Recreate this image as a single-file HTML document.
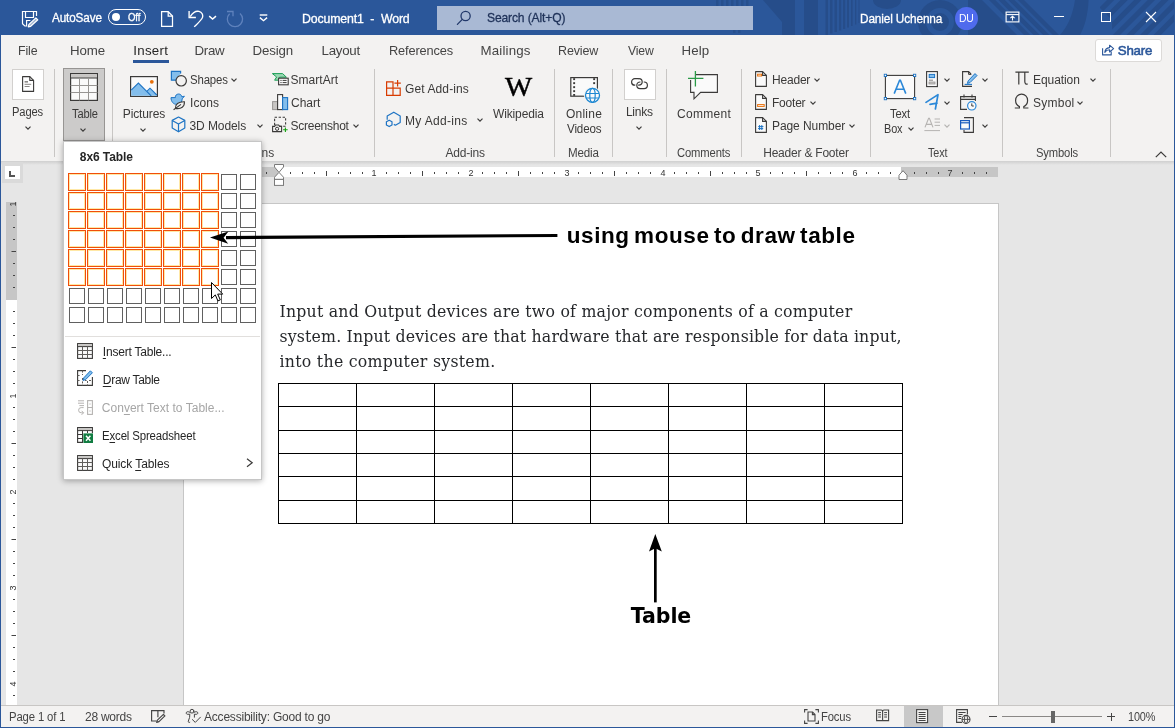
<!DOCTYPE html>
<html lang="en"><head><meta charset="utf-8"><title>Document1 - Word</title>
<style>
html,body{margin:0;padding:0;}
body{width:1175px;height:728px;overflow:hidden;position:relative;background:#e6e6e6;font-family:"Liberation Sans",sans-serif;}
.t{position:absolute;white-space:pre;}
#app{position:absolute;left:0;top:0;width:1175px;height:728px;overflow:hidden;will-change:transform;}
</style></head><body><div id="app">
<div style="position:absolute;left:0px;top:161px;width:1175px;height:544px;background:#e6e6e6;"></div>
<div style="position:absolute;left:0px;top:161px;width:1175px;height:4px;background:linear-gradient(#cfcfcf,#e6e6e6);"></div>
<div style="position:absolute;left:184px;top:204px;width:814px;height:501px;background:#ffffff;box-shadow:0 0 0 1px #c6c6c6;"></div>
<div style="position:absolute;left:262px;top:167px;width:17px;height:10px;background:#c6c6c6;"></div>
<div style="position:absolute;left:278px;top:167px;width:623px;height:10px;background:#ffffff;"></div>
<div style="position:absolute;left:901px;top:167px;width:97px;height:10px;background:#c6c6c6;"></div>
<div style="position:absolute;left:2px;top:162px;width:21px;height:21px;background:#dadada;"></div>
<div style="position:absolute;left:4.5px;top:166px;width:15px;height:13px;background:#ffffff;"></div>
<svg style="position:absolute;left:8px;top:170px;" width="8" height="8" viewBox="0 0 8 8"><path d="M2 1V6H7" fill="none" stroke="#555" stroke-width="2"/></svg>
<div style="position:absolute;left:6px;top:202px;width:11px;height:98px;background:#c6c6c6;"></div>
<div style="position:absolute;left:6px;top:300px;width:11px;height:405px;background:#ffffff;"></div>
<svg style="position:absolute;left:262px;top:167px;" width="736" height="10" viewBox="0 0 736 10"><rect x="4" y="5" width="1" height="2" fill="#444"/><rect x="28" y="5" width="1" height="2" fill="#444"/><rect x="40" y="5" width="1" height="2" fill="#444"/><rect x="52" y="5" width="1" height="2" fill="#444"/><rect x="64" y="4" width="1" height="5" fill="#444"/><rect x="76" y="5" width="1" height="2" fill="#444"/><rect x="88" y="5" width="1" height="2" fill="#444"/><rect x="100" y="5" width="1" height="2" fill="#444"/><rect x="124" y="5" width="1" height="2" fill="#444"/><rect x="136" y="5" width="1" height="2" fill="#444"/><rect x="148" y="5" width="1" height="2" fill="#444"/><rect x="160" y="4" width="1" height="5" fill="#444"/><rect x="172" y="5" width="1" height="2" fill="#444"/><rect x="184" y="5" width="1" height="2" fill="#444"/><rect x="196" y="5" width="1" height="2" fill="#444"/><rect x="220" y="5" width="1" height="2" fill="#444"/><rect x="232" y="5" width="1" height="2" fill="#444"/><rect x="244" y="5" width="1" height="2" fill="#444"/><rect x="256" y="4" width="1" height="5" fill="#444"/><rect x="268" y="5" width="1" height="2" fill="#444"/><rect x="280" y="5" width="1" height="2" fill="#444"/><rect x="292" y="5" width="1" height="2" fill="#444"/><rect x="316" y="5" width="1" height="2" fill="#444"/><rect x="328" y="5" width="1" height="2" fill="#444"/><rect x="340" y="5" width="1" height="2" fill="#444"/><rect x="352" y="4" width="1" height="5" fill="#444"/><rect x="364" y="5" width="1" height="2" fill="#444"/><rect x="376" y="5" width="1" height="2" fill="#444"/><rect x="388" y="5" width="1" height="2" fill="#444"/><rect x="412" y="5" width="1" height="2" fill="#444"/><rect x="424" y="5" width="1" height="2" fill="#444"/><rect x="436" y="5" width="1" height="2" fill="#444"/><rect x="448" y="4" width="1" height="5" fill="#444"/><rect x="460" y="5" width="1" height="2" fill="#444"/><rect x="472" y="5" width="1" height="2" fill="#444"/><rect x="484" y="5" width="1" height="2" fill="#444"/><rect x="508" y="5" width="1" height="2" fill="#444"/><rect x="520" y="5" width="1" height="2" fill="#444"/><rect x="532" y="5" width="1" height="2" fill="#444"/><rect x="544" y="4" width="1" height="5" fill="#444"/><rect x="556" y="5" width="1" height="2" fill="#444"/><rect x="568" y="5" width="1" height="2" fill="#444"/><rect x="580" y="5" width="1" height="2" fill="#444"/><rect x="604" y="5" width="1" height="2" fill="#444"/><rect x="616" y="5" width="1" height="2" fill="#444"/><rect x="628" y="5" width="1" height="2" fill="#444"/><rect x="640" y="4" width="1" height="5" fill="#444"/><rect x="652" y="5" width="1" height="2" fill="#444"/><rect x="664" y="5" width="1" height="2" fill="#444"/><rect x="676" y="5" width="1" height="2" fill="#444"/><rect x="700" y="5" width="1" height="2" fill="#444"/><rect x="712" y="5" width="1" height="2" fill="#444"/><rect x="724" y="5" width="1" height="2" fill="#444"/></svg>
<div class="t" style="left:371.60px;top:166.80px;font-family:'Liberation Sans', sans-serif;font-size:9px;font-weight:400;line-height:12px;color:#333;letter-spacing:0.000px;">1</div>
<div class="t" style="left:468.60px;top:166.80px;font-family:'Liberation Sans', sans-serif;font-size:9px;font-weight:400;line-height:12px;color:#333;letter-spacing:0.000px;">2</div>
<div class="t" style="left:564.60px;top:166.80px;font-family:'Liberation Sans', sans-serif;font-size:9px;font-weight:400;line-height:12px;color:#333;letter-spacing:0.000px;">3</div>
<div class="t" style="left:660.60px;top:166.80px;font-family:'Liberation Sans', sans-serif;font-size:9px;font-weight:400;line-height:12px;color:#333;letter-spacing:0.000px;">4</div>
<div class="t" style="left:755.60px;top:166.80px;font-family:'Liberation Sans', sans-serif;font-size:9px;font-weight:400;line-height:12px;color:#333;letter-spacing:0.000px;">5</div>
<div class="t" style="left:852.60px;top:166.80px;font-family:'Liberation Sans', sans-serif;font-size:9px;font-weight:400;line-height:12px;color:#333;letter-spacing:0.000px;">6</div>
<div class="t" style="left:947.60px;top:166.80px;font-family:'Liberation Sans', sans-serif;font-size:9px;font-weight:400;line-height:12px;color:#333;letter-spacing:0.000px;">7</div>
<svg style="position:absolute;left:273.5px;top:164px;" width="10" height="22" viewBox="0 0 10 22"><g fill="#fff" stroke="#7a7a7a" stroke-width="1"><path d="M0.5 0.5H9.5V3L5 8.4L0.5 3Z"/><path d="M5 8.4L9.5 13.2V15.4H0.5V13.2Z"/><rect x="0.5" y="15.4" width="9" height="6"/></g></svg>
<svg style="position:absolute;left:897.5px;top:170.3px;" width="10" height="10" viewBox="0 0 10 10"><path d="M5 0.7L9 5.2V9.5H1V5.2Z" fill="#fff" stroke="#7a7a7a" stroke-width="1"/></svg>
<svg style="position:absolute;left:6px;top:202px;" width="11" height="503" viewBox="0 0 11 503"><rect x="7" y="13" width="2" height="1" fill="#444"/><rect x="7" y="25" width="2" height="1" fill="#444"/><rect x="7" y="37" width="2" height="1" fill="#444"/><rect x="5.5" y="49" width="4.5" height="1" fill="#444"/><rect x="7" y="61" width="2" height="1" fill="#444"/><rect x="7" y="73" width="2" height="1" fill="#444"/><rect x="7" y="85" width="2" height="1" fill="#444"/><rect x="7" y="109" width="2" height="1" fill="#444"/><rect x="7" y="121" width="2" height="1" fill="#444"/><rect x="7" y="133" width="2" height="1" fill="#444"/><rect x="5.5" y="145" width="4.5" height="1" fill="#444"/><rect x="7" y="157" width="2" height="1" fill="#444"/><rect x="7" y="169" width="2" height="1" fill="#444"/><rect x="7" y="181" width="2" height="1" fill="#444"/><rect x="7" y="205" width="2" height="1" fill="#444"/><rect x="7" y="217" width="2" height="1" fill="#444"/><rect x="7" y="229" width="2" height="1" fill="#444"/><rect x="5.5" y="241" width="4.5" height="1" fill="#444"/><rect x="7" y="253" width="2" height="1" fill="#444"/><rect x="7" y="265" width="2" height="1" fill="#444"/><rect x="7" y="277" width="2" height="1" fill="#444"/><rect x="7" y="301" width="2" height="1" fill="#444"/><rect x="7" y="313" width="2" height="1" fill="#444"/><rect x="7" y="325" width="2" height="1" fill="#444"/><rect x="5.5" y="337" width="4.5" height="1" fill="#444"/><rect x="7" y="349" width="2" height="1" fill="#444"/><rect x="7" y="361" width="2" height="1" fill="#444"/><rect x="7" y="373" width="2" height="1" fill="#444"/><rect x="7" y="397" width="2" height="1" fill="#444"/><rect x="7" y="409" width="2" height="1" fill="#444"/><rect x="7" y="421" width="2" height="1" fill="#444"/><rect x="5.5" y="433" width="4.5" height="1" fill="#444"/><rect x="7" y="445" width="2" height="1" fill="#444"/><rect x="7" y="457" width="2" height="1" fill="#444"/><rect x="7" y="469" width="2" height="1" fill="#444"/><rect x="7" y="493" width="2" height="1" fill="#444"/></svg>
<div class="t" style="left:0;top:0;width:0;height:0;"><div style="position:absolute;left:12.5px;top:203.5px;transform:translate(-50%,-50%) rotate(-90deg);font-size:9px;line-height:9px;color:#333;">1</div></div>
<div class="t" style="left:0;top:0;width:0;height:0;"><div style="position:absolute;left:12.5px;top:395.5px;transform:translate(-50%,-50%) rotate(-90deg);font-size:9px;line-height:9px;color:#333;">1</div></div>
<div class="t" style="left:0;top:0;width:0;height:0;"><div style="position:absolute;left:12.5px;top:491.5px;transform:translate(-50%,-50%) rotate(-90deg);font-size:9px;line-height:9px;color:#333;">2</div></div>
<div class="t" style="left:0;top:0;width:0;height:0;"><div style="position:absolute;left:12.5px;top:587.5px;transform:translate(-50%,-50%) rotate(-90deg);font-size:9px;line-height:9px;color:#333;">3</div></div>
<div class="t" style="left:0;top:0;width:0;height:0;"><div style="position:absolute;left:12.5px;top:683.5px;transform:translate(-50%,-50%) rotate(-90deg);font-size:9px;line-height:9px;color:#333;">4</div></div>
<div class="t" style="left:279.50px;top:300.00px;font-family:'DejaVu Serif Condensed', 'DejaVu Serif', 'Liberation Serif', serif;font-size:17.5px;font-weight:400;line-height:23px;color:#26282b;letter-spacing:0.226px;">Input and Output devices are two of major components of a computer</div>
<div class="t" style="left:279.50px;top:325.00px;font-family:'DejaVu Serif Condensed', 'DejaVu Serif', 'Liberation Serif', serif;font-size:17.5px;font-weight:400;line-height:23px;color:#26282b;letter-spacing:0.180px;">system. Input devices are that hardware that are responsible for data input,</div>
<div class="t" style="left:279.50px;top:350.00px;font-family:'DejaVu Serif Condensed', 'DejaVu Serif', 'Liberation Serif', serif;font-size:17.5px;font-weight:400;line-height:23px;color:#26282b;letter-spacing:0.279px;">into the computer system.</div>
<svg style="position:absolute;left:278px;top:383px;" width="625" height="141" viewBox="0 0 625 141"><rect x="0" y="0" width="1" height="141" fill="#000"/><rect x="78" y="0" width="1" height="141" fill="#000"/><rect x="156" y="0" width="1" height="141" fill="#000"/><rect x="234" y="0" width="1" height="141" fill="#000"/><rect x="312" y="0" width="1" height="141" fill="#000"/><rect x="390" y="0" width="1" height="141" fill="#000"/><rect x="468" y="0" width="1" height="141" fill="#000"/><rect x="546" y="0" width="1" height="141" fill="#000"/><rect x="624" y="0" width="1" height="141" fill="#000"/><rect x="0" y="0" width="625" height="1" fill="#000"/><rect x="0" y="23" width="625" height="1" fill="#000"/><rect x="0" y="47" width="625" height="1" fill="#000"/><rect x="0" y="70" width="625" height="1" fill="#000"/><rect x="0" y="93" width="625" height="1" fill="#000"/><rect x="0" y="117" width="625" height="1" fill="#000"/><rect x="0" y="140" width="625" height="1" fill="#000"/></svg>
<div class="t" style="left:566.70px;top:220.70px;font-family:'Liberation Sans', sans-serif;font-size:22.5px;font-weight:700;line-height:29px;color:#000;letter-spacing:0.604px;word-spacing:-2.5px;">using mouse to draw table</div>
<div class="t" style="left:630.80px;top:602.60px;font-family:'DejaVu Sans', 'Liberation Sans', sans-serif;font-size:20.5px;font-weight:700;line-height:27px;color:#000;letter-spacing:-0.075px;">Table</div>
<div style="position:absolute;left:0px;top:0px;width:1175px;height:35px;background:#2b579a;"></div>
<svg style="position:absolute;left:0px;top:0px;" width="1175" height="35" viewBox="0 0 1175 35"><rect x="716" y="0" width="2.5" height="6" fill="#264d8a" opacity="0.8"/><rect x="733" y="29" width="2.5" height="4" fill="#264d8a" opacity="0.8"/><rect x="721" y="0" width="2.5" height="6" fill="#264d8a" opacity="0.8"/><rect x="738" y="29" width="2.5" height="4" fill="#264d8a" opacity="0.8"/><rect x="726" y="0" width="2.5" height="6" fill="#264d8a" opacity="0.8"/><rect x="731" y="0" width="2.5" height="6" fill="#264d8a" opacity="0.8"/><rect x="736" y="0" width="2.5" height="6" fill="#264d8a" opacity="0.8"/><rect x="741" y="0" width="2.5" height="6" fill="#264d8a" opacity="0.8"/><rect x="746" y="0" width="2.5" height="6" fill="#264d8a" opacity="0.8"/><path d="M763 0H795V35H782V22Z" fill="#264d8a"/><rect x="804" y="0" width="14" height="35" fill="#264d8a"/><rect x="825.5" y="0" width="2.5" height="35.0" fill="#264d8a"/><rect x="830" y="0" width="2.5" height="33.5" fill="#264d8a"/><rect x="834.5" y="0" width="2.5" height="32.0" fill="#264d8a"/><rect x="839" y="0" width="2.2" height="30.5" fill="#264d8a"/><rect x="843" y="0" width="2.2" height="29.0" fill="#264d8a"/><rect x="847" y="0" width="2" height="27.5" fill="#264d8a"/><rect x="851" y="0" width="1.6" height="26.0" fill="#264d8a"/><rect x="855" y="0" width="1.3" height="24.5" fill="#264d8a"/><rect x="858.5" y="0" width="1" height="23.0" fill="#264d8a"/><path d="M873 0A14 9 0 0 0 901 0Z" fill="#264d8a"/><circle cx="940" cy="22" r="22" fill="#264d8a"/><circle cx="940" cy="22" r="11.5" fill="none" stroke="#2b579a" stroke-width="5"/><path d="M968 0H982L1017 35H968Z" fill="#264d8a"/><path d="M989.0 0h6.2l35 35h-6.2Z" fill="#264d8a"/><path d="M998.6 0h6.2l35 35h-6.2Z" fill="#264d8a"/><path d="M1008.2 0h6.2l35 35h-6.2Z" fill="#264d8a"/><path d="M1017.8 0h6.2l35 35h-6.2Z" fill="#264d8a"/><path d="M1075 0H1088.6C1088 14 1085 26 1080 35H1060C1068 26 1073 14 1075 0Z" fill="#264d8a"/><clipPath id="cpr"><path d="M1100 0H1175V35H1112V20L1100 8Z"/></clipPath><g clip-path="url(#cpr)"><path d="M1107.0 0h7.2l-35 35h-7.2Z" fill="#264d8a"/><path d="M1120.6 0h7.2l-35 35h-7.2Z" fill="#264d8a"/><path d="M1134.2 0h7.2l-35 35h-7.2Z" fill="#264d8a"/><path d="M1147.8 0h7.2l-35 35h-7.2Z" fill="#264d8a"/><path d="M1161.4 0h7.2l-35 35h-7.2Z" fill="#264d8a"/><path d="M1175.0 0h7.2l-35 35h-7.2Z" fill="#264d8a"/><path d="M1188.6 0h7.2l-35 35h-7.2Z" fill="#264d8a"/></g></svg>
<svg style="position:absolute;left:20px;top:9px;" width="20" height="20" viewBox="0 0 20 20"><g fill="none" stroke="#ffffff" stroke-width="1.2" stroke-linejoin="miter"><path d="M16.5 6.9V2.5H2.5V14.7L4.8 17H6.6V11.5H10.4"/><path d="M5.5 2.5V8.5H13.5V2.5"/><path d="M15.9 8.9L17.8 10.8L10.7 17.3L8.3 17.9L8.9 15.5Z" stroke-linejoin="round" fill="#ffffff" fill-opacity="0.55"/></g></svg>
<div class="t" style="left:51.50px;top:9.00px;font-family:'Liberation Sans', sans-serif;font-size:13px;font-weight:400;line-height:17px;color:#ffffff;letter-spacing:-0.150px;transform:scaleX(0.9026);transform-origin:0 0;-webkit-text-stroke:0.3px;">AutoSave</div>
<div style="position:absolute;left:108px;top:9px;width:38px;height:16px;box-sizing:border-box;border:1px solid #fff;border-radius:8px;"></div>
<div style="position:absolute;left:112px;top:13.2px;width:8px;height:8px;background:#ffffff;border-radius:4px;"></div>
<div class="t" style="left:127.50px;top:10.00px;font-family:'Liberation Sans', sans-serif;font-size:10.5px;font-weight:400;line-height:14px;color:#ffffff;letter-spacing:-0.150px;transform:scaleX(0.9124);transform-origin:0 0;-webkit-text-stroke:0.3px;">Off</div>
<svg style="position:absolute;left:159px;top:10px;" width="16" height="18" viewBox="0 0 16 18"><g fill="none" stroke="#ffffff" stroke-width="1.25" stroke-linejoin="miter"><path d="M2.6 1.7H9.2L13.5 6V16.3H2.6Z"/><path d="M9.2 1.7V6.1H13.5"/></g></svg>
<svg style="position:absolute;left:187px;top:10px;" width="18" height="18" viewBox="0 0 18 18"><g fill="none" stroke="#ffffff" stroke-width="1.35" stroke-linecap="butt" stroke-linejoin="miter"><path d="M2.1 0.9V7.5H8.9"/><path d="M3.2 6.6C5.6 2.9 9.2 0.8 12 1.4C15 2 16.3 5 15.4 7.6C14.6 9.9 10.2 13.8 7.2 16.9"/></g></svg>
<svg style="position:absolute;left:208px;top:14px;" width="10" height="7" viewBox="0 0 10 7"><path d="M1.2 2.2L4.6 5L8 2.2" fill="none" stroke="#ffffff" stroke-width="1.5"/></svg>
<svg style="position:absolute;left:225px;top:10px;" width="19" height="18" viewBox="0 0 19 18"><g fill="none" stroke="#5f82bd" stroke-width="1.3"><path d="M2 1.5H8V6.3"/><path d="M4.6 3.7A7.6 7.6 0 1 0 15 3.4"/></g></svg>
<svg style="position:absolute;left:258px;top:13px;" width="11" height="9" viewBox="0 0 11 9"><g fill="none" stroke="#ffffff" stroke-width="1.4"><path d="M1.7 2H9.3"/><path d="M1.9 4.6L5.5 7.7L9.1 4.6"/></g></svg>
<div class="t" style="left:302.05px;top:10.00px;font-family:'Liberation Sans', sans-serif;font-size:13px;font-weight:400;line-height:17px;color:#ffffff;letter-spacing:-0.150px;transform:scaleX(0.9489);transform-origin:0 0;-webkit-text-stroke:0.3px;">Document1  -  Word</div>
<div style="position:absolute;left:437px;top:6px;width:316px;height:24px;background:#a9b9d4;"></div>
<svg style="position:absolute;left:456px;top:10px;" width="16" height="16" viewBox="0 0 16 16"><g fill="none" stroke="#22386a" stroke-width="1.3" stroke-linecap="round"><circle cx="9.6" cy="6" r="4.6"/><path d="M6.3 9.4L1.4 14.4"/></g></svg>
<div class="t" style="left:486.57px;top:9.00px;font-family:'Liberation Sans', sans-serif;font-size:13px;font-weight:400;line-height:17px;color:#1e3158;letter-spacing:-0.150px;transform:scaleX(0.9296);transform-origin:0 0;-webkit-text-stroke:0.3px;">Search (Alt+Q)</div>
<div class="t" style="left:860.09px;top:9.50px;font-family:'Liberation Sans', sans-serif;font-size:13px;font-weight:400;line-height:17px;color:#ffffff;letter-spacing:-0.150px;transform:scaleX(0.9095);transform-origin:0 0;-webkit-text-stroke:0.3px;">Daniel Uchenna</div>
<div style="position:absolute;left:954.5px;top:6.5px;width:23px;height:23px;background:#4f6bed;border-radius:12px;"></div>
<div class="t" style="left:958.55px;top:11.00px;font-family:'Liberation Sans', sans-serif;font-size:11px;font-weight:400;line-height:14px;color:#ffffff;letter-spacing:-0.150px;transform:scaleX(0.9458);transform-origin:0 0;">DU</div>
<svg style="position:absolute;left:1005px;top:11px;" width="15" height="12" viewBox="0 0 15 12"><g fill="none" stroke="#ffffff" stroke-width="1.1"><rect x="1.1" y="1.1" width="12.8" height="9.8"/><path d="M1.1 3.6H13.9"/><path d="M7.5 9.6V5.4M5.4 7.2L7.5 5.2L9.6 7.2"/></g></svg>
<div style="position:absolute;left:1054px;top:16px;width:10px;height:1px;background:#ffffff;"></div>
<div style="position:absolute;left:1100.5px;top:12px;width:10px;height:10px;box-sizing:border-box;border:1px solid #fff;"></div>
<svg style="position:absolute;left:1145px;top:11px;" width="12" height="12" viewBox="0 0 12 12"><path d="M1 1L11 11M11 1L1 11" stroke="#ffffff" stroke-width="1.1" fill="none"/></svg>
<div style="position:absolute;left:0px;top:35px;width:1175px;height:126px;background:#f3f2f1;"></div>
<div class="t" style="left:17.57px;top:42.00px;font-family:'Liberation Sans', sans-serif;font-size:13.3px;font-weight:400;line-height:17px;color:#444444;letter-spacing:-0.150px;transform:scaleX(0.9309);transform-origin:0 0;">File</div>
<div class="t" style="left:70.00px;top:42.00px;font-family:'Liberation Sans', sans-serif;font-size:13.3px;font-weight:400;line-height:17px;color:#444444;letter-spacing:-0.100px;">Home</div>
<div class="t" style="left:133.20px;top:42.00px;font-family:'Liberation Sans', sans-serif;font-size:13.3px;font-weight:400;line-height:17px;color:#262626;letter-spacing:0.300px;">Insert</div>
<div class="t" style="left:194.50px;top:42.00px;font-family:'Liberation Sans', sans-serif;font-size:13.3px;font-weight:400;line-height:17px;color:#444444;letter-spacing:-0.267px;">Draw</div>
<div class="t" style="left:252.50px;top:42.00px;font-family:'Liberation Sans', sans-serif;font-size:13.3px;font-weight:400;line-height:17px;color:#444444;letter-spacing:-0.140px;">Design</div>
<div class="t" style="left:321.50px;top:42.00px;font-family:'Liberation Sans', sans-serif;font-size:13.3px;font-weight:400;line-height:17px;color:#444444;letter-spacing:-0.260px;">Layout</div>
<div class="t" style="left:388.54px;top:42.00px;font-family:'Liberation Sans', sans-serif;font-size:13.3px;font-weight:400;line-height:17px;color:#444444;letter-spacing:-0.150px;transform:scaleX(0.9627);transform-origin:0 0;">References</div>
<div class="t" style="left:480.50px;top:42.00px;font-family:'Liberation Sans', sans-serif;font-size:13.3px;font-weight:400;line-height:17px;color:#444444;letter-spacing:0.171px;">Mailings</div>
<div class="t" style="left:558.31px;top:42.00px;font-family:'Liberation Sans', sans-serif;font-size:13.3px;font-weight:400;line-height:17px;color:#444444;letter-spacing:-0.150px;transform:scaleX(0.9396);transform-origin:0 0;">Review</div>
<div class="t" style="left:628.00px;top:42.00px;font-family:'Liberation Sans', sans-serif;font-size:13.3px;font-weight:400;line-height:17px;color:#444444;letter-spacing:-0.150px;transform:scaleX(0.9177);transform-origin:0 0;">View</div>
<div class="t" style="left:681.50px;top:42.00px;font-family:'Liberation Sans', sans-serif;font-size:13.3px;font-weight:400;line-height:17px;color:#444444;letter-spacing:0.067px;">Help</div>
<div style="position:absolute;left:133px;top:60px;width:36px;height:3px;background:#2b579a;"></div>
<div style="position:absolute;left:1094.5px;top:38.5px;width:67px;height:23px;background:#ffffff;box-sizing:border-box;border:1px solid #dcdad8;border-radius:3px;"></div>
<div class="t" style="left:1117.70px;top:42.00px;font-family:'Liberation Sans', sans-serif;font-size:13.3px;font-weight:400;line-height:17px;color:#2b579a;letter-spacing:-0.175px;-webkit-text-stroke:0.55px;">Share</div>
<div style="position:absolute;left:54px;top:69px;width:1px;height:88px;background:#c8c6c4;"></div>
<div style="position:absolute;left:112px;top:69px;width:1px;height:88px;background:#c8c6c4;"></div>
<div style="position:absolute;left:374px;top:69px;width:1px;height:88px;background:#c8c6c4;"></div>
<div style="position:absolute;left:554px;top:69px;width:1px;height:88px;background:#c8c6c4;"></div>
<div style="position:absolute;left:612px;top:69px;width:1px;height:88px;background:#c8c6c4;"></div>
<div style="position:absolute;left:666px;top:69px;width:1px;height:88px;background:#c8c6c4;"></div>
<div style="position:absolute;left:741px;top:69px;width:1px;height:88px;background:#c8c6c4;"></div>
<div style="position:absolute;left:870px;top:69px;width:1px;height:88px;background:#c8c6c4;"></div>
<div style="position:absolute;left:1002px;top:69px;width:1px;height:88px;background:#c8c6c4;"></div>
<div style="position:absolute;left:1110px;top:69px;width:1px;height:88px;background:#c8c6c4;"></div>
<div style="position:absolute;left:12px;top:69px;width:32px;height:31px;background:#ffffff;box-sizing:border-box;border:1px solid #d2d0ce;"></div>
<svg style="position:absolute;left:21px;top:75px;" width="15" height="18" viewBox="0 0 15 18"><g fill="none" stroke="#3b3a39" stroke-width="1.1" stroke-linejoin="round"><path d="M1.6 1.6H8.8L12.6 5.4V16.4H1.6Z"/><path d="M8.8 1.6V5.4H12.6"/></g><rect x="3.6" y="6" width="3.4" height="1.6" fill="#8a8886"/><rect x="3.6" y="8.8" width="6.6" height="1" fill="#8a8886"/><rect x="3.6" y="11" width="5" height="1" fill="#8a8886"/></svg>
<div class="t" style="left:12.07px;top:103.60px;font-family:'Liberation Sans', sans-serif;font-size:12px;font-weight:400;line-height:16px;color:#3b3a39;letter-spacing:-0.150px;transform:scaleX(0.9321);transform-origin:0 0;">Pages</div>
<svg style="position:absolute;left:24.6px;top:125.7px;" width="8" height="6" viewBox="0 0 8 6"><path d="M0.5 0.6L3.0 3.2L5.5 0.6" fill="none" stroke="#3b3a39" stroke-width="1.15"/></svg>
<div style="position:absolute;left:63px;top:68px;width:42px;height:73px;background:#cccbca;box-sizing:border-box;border:1px solid #979593;"></div>
<svg style="position:absolute;left:70px;top:73px;" width="28" height="28" viewBox="0 0 28 28"><rect x="0.6" y="0.6" width="26.8" height="26.8" fill="#fafafa" stroke="#3b3a39" stroke-width="1.2"/><rect x="1.2" y="1.2" width="25.6" height="3.6" fill="#c8c6c4"/><path d="M0.6 5H27.4" stroke="#3b3a39" stroke-width="1"/><path d="M9.5 5V27.4" stroke="#979593" stroke-width="1"/><path d="M18.5 5V27.4" stroke="#979593" stroke-width="1"/><path d="M0.6 12.5H27.4" stroke="#979593" stroke-width="1"/><path d="M0.6 19.5H27.4" stroke="#979593" stroke-width="1"/></svg>
<div class="t" style="left:71.50px;top:106.00px;font-family:'Liberation Sans', sans-serif;font-size:12px;font-weight:400;line-height:16px;color:#3b3a39;letter-spacing:-0.150px;transform:scaleX(0.9270);transform-origin:0 0;">Table</div>
<svg style="position:absolute;left:80.39999999999999px;top:127.5px;" width="8" height="6" viewBox="0 0 8 6"><path d="M0.5 0.6L3.0 3.2L5.5 0.6" fill="none" stroke="#3b3a39" stroke-width="1.15"/></svg>
<svg style="position:absolute;left:130px;top:76px;" width="28" height="21" viewBox="0 0 28 21"><rect x="0.6" y="0.6" width="26.8" height="19.8" fill="#fafafa" stroke="#3b3a39" stroke-width="1.2"/><path d="M1.2 14.2L8.4 7L17 15.6L20 12.4L26.8 19.2V19.8H1.2Z" fill="#83beec"/><path d="M1.2 14.2L8.4 7L21.2 19.8M16.8 15.4L20 12.2L26.8 19" fill="none" stroke="#1e74c4" stroke-width="1.1"/><circle cx="21.8" cy="5.8" r="1.9" fill="#e8700a"/></svg>
<div class="t" style="left:122.80px;top:106.00px;font-family:'Liberation Sans', sans-serif;font-size:12px;font-weight:400;line-height:16px;color:#3b3a39;letter-spacing:-0.129px;">Pictures</div>
<svg style="position:absolute;left:140.29999999999998px;top:127.5px;" width="8" height="6" viewBox="0 0 8 6"><path d="M0.5 0.6L3.0 3.2L5.5 0.6" fill="none" stroke="#3b3a39" stroke-width="1.15"/></svg>
<svg style="position:absolute;left:170px;top:70px;" width="18" height="18" viewBox="0 0 18 18"><path d="M6.2 10.2H1.4V1.4H10.6V3.6" fill="#83beec" stroke="#1e74c4" stroke-width="1.2"/><circle cx="11.2" cy="10.8" r="5.2" fill="#f3f2f1" stroke="#3b3a39" stroke-width="1.2"/></svg>
<div class="t" style="left:189.55px;top:72.00px;font-family:'Liberation Sans', sans-serif;font-size:12px;font-weight:400;line-height:16px;color:#3b3a39;letter-spacing:-0.150px;transform:scaleX(0.9490);transform-origin:0 0;">Shapes</div>
<svg style="position:absolute;left:231.1px;top:77.6px;" width="8" height="6" viewBox="0 0 8 6"><path d="M0.5 0.6L3.0 3.2L5.5 0.6" fill="none" stroke="#3b3a39" stroke-width="1.15"/></svg>
<svg style="position:absolute;left:170px;top:93px;" width="16" height="18" viewBox="0 0 16 18"><path d="M1 4.6H5.4C5 2.6 6.6 1 8.6 1C10.4 1 11.6 2.2 11.8 3.8L14.4 3.2L12.2 5.8C12.2 9 10.2 11.4 6.8 11.4C3.4 11.4 1 8.6 1 4.6Z" fill="#83beec" stroke="#1e74c4" stroke-width="1"/><path d="M5.4 15.4C5 11.4 8.4 8.6 14.4 8.8C14.8 13.6 11.2 16.4 5.4 15.4Z" fill="#f3f2f1" stroke="#3b3a39" stroke-width="1.1"/><path d="M3.6 16.8L11 11.4" stroke="#3b3a39" stroke-width="1.1"/></svg>
<div class="t" style="left:190.00px;top:95.00px;font-family:'Liberation Sans', sans-serif;font-size:12px;font-weight:400;line-height:16px;color:#3b3a39;letter-spacing:0.050px;">Icons</div>
<svg style="position:absolute;left:171px;top:116px;" width="15" height="17" viewBox="0 0 15 17"><g fill="none" stroke="#1e74c4" stroke-width="1.2" stroke-linejoin="round"><path d="M7.5 1L13.8 4.4V12L7.5 15.8L1.2 12V4.4Z"/><path d="M1.2 4.4L7.5 8L13.8 4.4M7.5 8V15.8"/></g></svg>
<div class="t" style="left:189.50px;top:118.00px;font-family:'Liberation Sans', sans-serif;font-size:12px;font-weight:400;line-height:16px;color:#3b3a39;letter-spacing:-0.088px;">3D Models</div>
<svg style="position:absolute;left:256.6px;top:123.6px;" width="8" height="6" viewBox="0 0 8 6"><path d="M0.5 0.6L3.0 3.2L5.5 0.6" fill="none" stroke="#3b3a39" stroke-width="1.15"/></svg>
<svg style="position:absolute;left:272px;top:73px;" width="17" height="13" viewBox="0 0 17 13"><path d="M0.4 0.6H10.6L14.4 4.2H7.6V7.2H2.6L4.6 4Z" fill="#9ad7b3" stroke="#1a9e55" stroke-width="1"/><rect x="6.6" y="5.2" width="9.6" height="6.6" fill="#fafafa" stroke="#3b3a39" stroke-width="1.1"/><path d="M8.4 7.4H9.6M10.6 7.4H14.6M8.4 9.6H9.6M10.6 9.6H14.6" stroke="#3b3a39" stroke-width="1"/></svg>
<div class="t" style="left:290.50px;top:72.00px;font-family:'Liberation Sans', sans-serif;font-size:12px;font-weight:400;line-height:16px;color:#3b3a39;letter-spacing:0.043px;">SmartArt</div>
<svg style="position:absolute;left:272px;top:94px;" width="17" height="17" viewBox="0 0 17 17"><rect x="0.6" y="7.6" width="5" height="8" fill="#c8c6c4" stroke="#979593" stroke-width="1"/><rect x="5.6" y="0.6" width="5" height="15" fill="#fafafa" stroke="#3b3a39" stroke-width="1.1"/><rect x="10.6" y="3.6" width="5" height="12" fill="#83beec" stroke="#1e74c4" stroke-width="1.1"/></svg>
<div class="t" style="left:291.00px;top:95.00px;font-family:'Liberation Sans', sans-serif;font-size:12px;font-weight:400;line-height:16px;color:#3b3a39;letter-spacing:0.000px;">Chart</div>
<svg style="position:absolute;left:272px;top:116px;" width="17" height="17" viewBox="0 0 17 17"><rect x="2.6" y="1.2" width="11" height="9" fill="none" stroke="#3b3a39" stroke-width="1.1" stroke-dasharray="2.4 1.6"/><path d="M0.6 10.4H2.6L3.6 9H6.6L7.6 10.4H9.6V15.6H0.6Z" fill="#f3f2f1" stroke="#3b3a39" stroke-width="1.1"/><circle cx="5.1" cy="12.8" r="1.6" fill="none" stroke="#3b3a39" stroke-width="1"/><path d="M13.4 11.4V16M11.1 13.7H15.7" stroke="#13a10e" stroke-width="1.1"/></svg>
<div class="t" style="left:290.50px;top:118.00px;font-family:'Liberation Sans', sans-serif;font-size:12px;font-weight:400;line-height:16px;color:#3b3a39;letter-spacing:-0.256px;">Screenshot</div>
<svg style="position:absolute;left:353.1px;top:123.6px;" width="8" height="6" viewBox="0 0 8 6"><path d="M0.5 0.6L3.0 3.2L5.5 0.6" fill="none" stroke="#3b3a39" stroke-width="1.15"/></svg>
<div class="t" style="left:211.50px;top:145.00px;font-family:'Liberation Sans', sans-serif;font-size:12px;font-weight:400;line-height:16px;color:#444;letter-spacing:0.175px;">Illustrations</div>
<svg style="position:absolute;left:386px;top:80px;" width="16" height="16" viewBox="0 0 16 16"><g fill="none" stroke="#d83b01" stroke-width="1.2"><path d="M0.6 8.2V1.8H7V8.2M0.6 8.2H14.2V15.4H0.6ZM7 8.2V15.4"/><path d="M11.6 0V6.4M8.4 3.2H14.8"/></g></svg>
<div class="t" style="left:405.00px;top:81.00px;font-family:'Liberation Sans', sans-serif;font-size:12px;font-weight:400;line-height:16px;color:#3b3a39;letter-spacing:0.110px;">Get Add-ins</div>
<svg style="position:absolute;left:385px;top:111px;" width="17" height="17" viewBox="0 0 17 17"><g fill="none" stroke="#1e74c4" stroke-width="1.2" stroke-linejoin="round"><path d="M2.2 8.8V5L8.8 1.2L15.2 5V11.4L10.4 14.2L8.8 13.4"/><path d="M4.2 9.2L7 10.8V14L4.2 15.6L1.4 14V10.8Z"/></g></svg>
<div class="t" style="left:405.00px;top:112.70px;font-family:'Liberation Sans', sans-serif;font-size:12px;font-weight:400;line-height:16px;color:#3b3a39;letter-spacing:0.322px;">My Add-ins</div>
<svg style="position:absolute;left:477.3px;top:118.4px;" width="8" height="6" viewBox="0 0 8 6"><path d="M0.5 0.6L3.0 3.2L5.5 0.6" fill="none" stroke="#3b3a39" stroke-width="1.15"/></svg>
<div class="t" style="left:504.50px;top:69.50px;font-family:'Liberation Serif', serif;font-size:27px;font-weight:400;line-height:35px;color:#000;letter-spacing:0.000px;transform:scaleX(1.0654);transform-origin:0 0;-webkit-text-stroke:0.45px;">W</div>
<div class="t" style="left:493.00px;top:106.00px;font-family:'Liberation Sans', sans-serif;font-size:12px;font-weight:400;line-height:16px;color:#3b3a39;letter-spacing:-0.137px;">Wikipedia</div>
<div class="t" style="left:445.50px;top:145.00px;font-family:'Liberation Sans', sans-serif;font-size:12px;font-weight:400;line-height:16px;color:#444;letter-spacing:-0.217px;">Add-ins</div>
<svg style="position:absolute;left:570px;top:76px;" width="31" height="27" viewBox="0 0 31 27"><rect x="0.8" y="1.6" width="26.6" height="18.6" fill="#fafafa" stroke="#3b3a39" stroke-width="1.2"/><rect x="3.2" y="2.2" width="1.9" height="1.9" fill="#3b3a39"/><rect x="3.2" y="6.2" width="1.9" height="1.9" fill="#3b3a39"/><rect x="3.2" y="10.2" width="1.9" height="1.9" fill="#3b3a39"/><rect x="3.2" y="14.2" width="1.9" height="1.9" fill="#3b3a39"/><rect x="3.2" y="18" width="1.9" height="1.9" fill="#3b3a39"/><rect x="23.2" y="2.2" width="1.9" height="1.9" fill="#3b3a39"/><rect x="23.2" y="6.2" width="1.9" height="1.9" fill="#3b3a39"/><circle cx="22.5" cy="19.3" r="8.6" fill="#f3f2f1"/><circle cx="22.5" cy="19.3" r="7" fill="#fafafa" stroke="#1e88d2" stroke-width="1.3"/><ellipse cx="22.5" cy="19.3" rx="2.7" ry="7" fill="none" stroke="#1e88d2" stroke-width="1.2"/><path d="M16 17.5H29M16 22H29" stroke="#1e88d2" stroke-width="1.1"/></svg>
<div class="t" style="left:565.90px;top:106.00px;font-family:'Liberation Sans', sans-serif;font-size:12px;font-weight:400;line-height:16px;color:#3b3a39;letter-spacing:0.260px;">Online</div>
<div class="t" style="left:566.90px;top:121.30px;font-family:'Liberation Sans', sans-serif;font-size:12px;font-weight:400;line-height:16px;color:#3b3a39;letter-spacing:-0.150px;transform:scaleX(0.9674);transform-origin:0 0;">Videos</div>
<div class="t" style="left:568.24px;top:145.00px;font-family:'Liberation Sans', sans-serif;font-size:12px;font-weight:400;line-height:16px;color:#444;letter-spacing:-0.150px;transform:scaleX(0.9650);transform-origin:0 0;">Media</div>
<div style="position:absolute;left:624px;top:69px;width:32px;height:31px;background:#ffffff;box-sizing:border-box;border:1px solid #d2d0ce;"></div>
<svg style="position:absolute;left:631px;top:78px;" width="18" height="12" viewBox="0 0 18 12"><g fill="none" stroke="#3b3a39" stroke-width="1.2"><rect x="0.6" y="0.6" width="10.6" height="6.6" rx="3.3"/><path d="M9.1 4A3.3 3.3 0 0 0 9.1 10.6" stroke="#fff" stroke-width="3.2"/><rect x="5.8" y="4" width="10.6" height="6.6" rx="3.3"/><path d="M7.9 0.6A3.3 3.3 0 0 1 7.9 7.2" stroke="#fff" stroke-width="3.2"/><path d="M7.4 0.6H7.9A3.3 3.3 0 0 1 7.9 7.2H7.4"/></g></svg>
<div class="t" style="left:625.90px;top:103.60px;font-family:'Liberation Sans', sans-serif;font-size:12px;font-weight:400;line-height:16px;color:#3b3a39;letter-spacing:-0.200px;">Links</div>
<svg style="position:absolute;left:636.3000000000001px;top:125.7px;" width="8" height="6" viewBox="0 0 8 6"><path d="M0.5 0.6L3.0 3.2L5.5 0.6" fill="none" stroke="#3b3a39" stroke-width="1.15"/></svg>
<svg style="position:absolute;left:688px;top:71px;" width="31" height="29" viewBox="0 0 31 29"><path d="M6.4 3.6H29.4V21.4H12.6L6 27.8V21.4H2.6V8" fill="#fafafa" stroke="#3b3a39" stroke-width="1.1" stroke-linejoin="miter"/><rect x="2" y="3" width="5" height="6" fill="#f3f2f1"/><path d="M7.4 0V15.4M0 7.4H15.4" stroke="#2a9a47" stroke-width="1.3"/></svg>
<div class="t" style="left:677.00px;top:106.00px;font-family:'Liberation Sans', sans-serif;font-size:12px;font-weight:400;line-height:16px;color:#3b3a39;letter-spacing:0.317px;">Comment</div>
<div class="t" style="left:677.06px;top:145.00px;font-family:'Liberation Sans', sans-serif;font-size:12px;font-weight:400;line-height:16px;color:#444;letter-spacing:-0.150px;transform:scaleX(0.9366);transform-origin:0 0;">Comments</div>
<svg style="position:absolute;left:755px;top:71px;" width="12" height="16" viewBox="0 0 12 16"><path d="M0.6 0.6H7.6L11.4 4.4V15.4H0.6Z" fill="#fafafa" stroke="#3b3a39" stroke-width="1.1" stroke-linejoin="round"/><path d="M7.6 0.6V4.4H11.4" fill="none" stroke="#3b3a39" stroke-width="1.1"/><rect x="2.6" y="3.2" width="4" height="1.8" fill="#fff" stroke="#e8700a" stroke-width="1"/></svg>
<div class="t" style="left:772.00px;top:72.00px;font-family:'Liberation Sans', sans-serif;font-size:12px;font-weight:400;line-height:16px;color:#3b3a39;letter-spacing:-0.200px;">Header</div>
<svg style="position:absolute;left:813.7px;top:77.6px;" width="8" height="6" viewBox="0 0 8 6"><path d="M0.5 0.6L3.0 3.2L5.5 0.6" fill="none" stroke="#3b3a39" stroke-width="1.15"/></svg>
<svg style="position:absolute;left:755px;top:94px;" width="12" height="16" viewBox="0 0 12 16"><path d="M0.6 0.6H7.6L11.4 4.4V15.4H0.6Z" fill="#fafafa" stroke="#3b3a39" stroke-width="1.1" stroke-linejoin="round"/><path d="M7.6 0.6V4.4H11.4" fill="none" stroke="#3b3a39" stroke-width="1.1"/><rect x="2.6" y="10.6" width="6.6" height="1.8" fill="#fff" stroke="#e8700a" stroke-width="1"/></svg>
<div class="t" style="left:772.00px;top:95.00px;font-family:'Liberation Sans', sans-serif;font-size:12px;font-weight:400;line-height:16px;color:#3b3a39;letter-spacing:-0.220px;">Footer</div>
<svg style="position:absolute;left:809.7px;top:100.6px;" width="8" height="6" viewBox="0 0 8 6"><path d="M0.5 0.6L3.0 3.2L5.5 0.6" fill="none" stroke="#3b3a39" stroke-width="1.15"/></svg>
<svg style="position:absolute;left:755px;top:117px;" width="12" height="16" viewBox="0 0 12 16"><path d="M0.6 0.6H7.6L11.4 4.4V15.4H0.6Z" fill="#fafafa" stroke="#3b3a39" stroke-width="1.1" stroke-linejoin="round"/><path d="M7.6 0.6V4.4H11.4" fill="none" stroke="#3b3a39" stroke-width="1.1"/><path d="M4.6 8V13M6.8 8V13M3.2 9.6H8.4M3 11.6H8.2" stroke="#1e74c4" stroke-width="1"/></svg>
<div class="t" style="left:772.00px;top:118.00px;font-family:'Liberation Sans', sans-serif;font-size:12px;font-weight:400;line-height:16px;color:#3b3a39;letter-spacing:-0.080px;">Page Number</div>
<svg style="position:absolute;left:848.5px;top:123.6px;" width="8" height="6" viewBox="0 0 8 6"><path d="M0.5 0.6L3.0 3.2L5.5 0.6" fill="none" stroke="#3b3a39" stroke-width="1.15"/></svg>
<div class="t" style="left:763.20px;top:145.00px;font-family:'Liberation Sans', sans-serif;font-size:12px;font-weight:400;line-height:16px;color:#444;letter-spacing:-0.214px;">Header &amp; Footer</div>
<svg style="position:absolute;left:883px;top:73px;" width="34" height="28" viewBox="0 0 34 28"><rect x="2.4" y="2.4" width="29.2" height="23.2" fill="#fafafa" stroke="#3b3a39" stroke-width="1.1"/><rect x="1.25" y="1.25" width="2.3" height="2.3" fill="#fff" stroke="#1e74c4" stroke-width="0.9"/><rect x="30.450000000000003" y="1.25" width="2.3" height="2.3" fill="#fff" stroke="#1e74c4" stroke-width="0.9"/><rect x="1.25" y="24.450000000000003" width="2.3" height="2.3" fill="#fff" stroke="#1e74c4" stroke-width="0.9"/><rect x="30.450000000000003" y="24.450000000000003" width="2.3" height="2.3" fill="#fff" stroke="#1e74c4" stroke-width="0.9"/><path d="M11.2 20.6L16.6 7.2H17.4L22.8 20.6M13 16.2H21" fill="none" stroke="#2b88d8" stroke-width="1.6"/></svg>
<div class="t" style="left:890.00px;top:106.00px;font-family:'Liberation Sans', sans-serif;font-size:12px;font-weight:400;line-height:16px;color:#3b3a39;letter-spacing:-0.150px;transform:scaleX(0.9327);transform-origin:0 0;">Text</div>
<div class="t" style="left:884.19px;top:121.30px;font-family:'Liberation Sans', sans-serif;font-size:12px;font-weight:400;line-height:16px;color:#3b3a39;letter-spacing:-0.150px;transform:scaleX(0.9086);transform-origin:0 0;">Box</div>
<svg style="position:absolute;left:907.5px;top:127.3px;" width="8" height="6" viewBox="0 0 8 6"><path d="M0.5 0.6L3.0 3.2L5.5 0.6" fill="none" stroke="#3b3a39" stroke-width="1.15"/></svg>
<svg style="position:absolute;left:926px;top:71px;" width="13" height="17" viewBox="0 0 13 17"><rect x="0.6" y="0.6" width="10.8" height="15" fill="#fafafa" stroke="#3b3a39" stroke-width="1.1"/><rect x="3.2" y="3.4" width="5.4" height="3.2" fill="#83beec" stroke="#1e74c4" stroke-width="1"/><rect x="3" y="8.6" width="4" height="1.2" fill="#979593"/><rect x="3" y="11" width="6" height="2" fill="#c8c6c4" stroke="#979593" stroke-width="0.8"/></svg>
<svg style="position:absolute;left:944.4px;top:77.6px;" width="8" height="6" viewBox="0 0 8 6"><path d="M0.5 0.6L3.0 3.2L5.5 0.6" fill="none" stroke="#3b3a39" stroke-width="1.15"/></svg>
<svg style="position:absolute;left:925px;top:93px;" width="15" height="17" viewBox="0 0 15 17"><path d="M1 9.4L13 1.6L10.4 16M5 11.4L12 10.2" fill="none" stroke="#2b88d8" stroke-width="1.7" stroke-linecap="round" stroke-linejoin="round"/></svg>
<svg style="position:absolute;left:944.4px;top:100.6px;" width="8" height="6" viewBox="0 0 8 6"><path d="M0.5 0.6L3.0 3.2L5.5 0.6" fill="none" stroke="#3b3a39" stroke-width="1.15"/></svg>
<svg style="position:absolute;left:924px;top:117px;" width="17" height="15" viewBox="0 0 17 15"><path d="M1 10.4L4.6 1.4H5.4L9 10.4M2.2 7.4H7.8" fill="none" stroke="#b5b3b1" stroke-width="1.1"/><path d="M10.6 2H16M10.6 5.2H16M10.6 8.4H16M0.4 13.6H16" stroke="#b5b3b1" stroke-width="1"/></svg>
<svg style="position:absolute;left:944.4px;top:123.6px;" width="8" height="6" viewBox="0 0 8 6"><path d="M0.5 0.6L3.0 3.2L5.5 0.6" fill="none" stroke="#b5b3b1" stroke-width="1.15"/></svg>
<svg style="position:absolute;left:962px;top:71px;" width="16" height="17" viewBox="0 0 16 17"><path d="M10 15.4H0.6V0.6H6.6L9 3" fill="none" stroke="#3b3a39" stroke-width="1.1"/><path d="M6.6 0.6V3.4H9.4" fill="none" stroke="#3b3a39" stroke-width="1"/><path d="M13 2.6L15 4.6L8 11.6L5.4 12.4L6.2 9.8Z" fill="#83beec" stroke="#1e74c4" stroke-width="1"/><path d="M2.6 13.4H10" stroke="#1e74c4" stroke-width="1.1"/></svg>
<svg style="position:absolute;left:982.4px;top:77.6px;" width="8" height="6" viewBox="0 0 8 6"><path d="M0.5 0.6L3.0 3.2L5.5 0.6" fill="none" stroke="#3b3a39" stroke-width="1.15"/></svg>
<svg style="position:absolute;left:960px;top:94px;" width="17" height="17" viewBox="0 0 17 17"><path d="M7 15.4H0.6V2.6H15.4V7" fill="none" stroke="#3b3a39" stroke-width="1.1"/><path d="M0.6 5.4H15.4M4 0.4V3.4M12 0.4V3.4" stroke="#3b3a39" stroke-width="1.1"/><circle cx="11.8" cy="11.8" r="4.2" fill="#fafafa" stroke="#2b88d8" stroke-width="1.2"/><path d="M11.8 9.4V12H13.8" fill="none" stroke="#3b3a39" stroke-width="1"/></svg>
<svg style="position:absolute;left:960px;top:117px;" width="14" height="16" viewBox="0 0 14 16"><path d="M4 0.6H13.4V15.4H4V13" fill="none" stroke="#3b3a39" stroke-width="1.1"/><rect x="0.6" y="3.6" width="8.8" height="8.4" fill="#fafafa" stroke="#185abd" stroke-width="1.2"/><path d="M0.6 5.8H9.4" stroke="#185abd" stroke-width="1.2"/></svg>
<svg style="position:absolute;left:982.4px;top:123.6px;" width="8" height="6" viewBox="0 0 8 6"><path d="M0.5 0.6L3.0 3.2L5.5 0.6" fill="none" stroke="#3b3a39" stroke-width="1.15"/></svg>
<div class="t" style="left:927.70px;top:145.00px;font-family:'Liberation Sans', sans-serif;font-size:12px;font-weight:400;line-height:16px;color:#444;letter-spacing:-0.150px;transform:scaleX(0.9002);transform-origin:0 0;">Text</div>
<svg style="position:absolute;left:1015px;top:71px;" width="15" height="14" viewBox="0 0 15 14"><path d="M0.4 1.2H13.8M3.8 1.2V13.4M9.8 1.2V10.6C9.8 12.6 10.8 13.4 12.8 13" fill="none" stroke="#3b3a39" stroke-width="1.2"/></svg>
<div class="t" style="left:1033.00px;top:72.00px;font-family:'Liberation Sans', sans-serif;font-size:12px;font-weight:400;line-height:16px;color:#3b3a39;letter-spacing:-0.071px;">Equation</div>
<svg style="position:absolute;left:1090.3px;top:77.6px;" width="8" height="6" viewBox="0 0 8 6"><path d="M0.5 0.6L3.0 3.2L5.5 0.6" fill="none" stroke="#3b3a39" stroke-width="1.15"/></svg>
<svg style="position:absolute;left:1014px;top:93px;" width="16" height="16" viewBox="0 0 16 16"><path d="M0.8 15H5.4V13.6C2.8 12.2 1.6 10 1.6 7.4C1.6 3.8 4.2 1.2 7.6 1.2C11 1.2 13.6 3.8 13.6 7.4C13.6 10 12.4 12.2 9.8 13.6V15H14.4" fill="none" stroke="#3b3a39" stroke-width="1.2"/></svg>
<div class="t" style="left:1033.00px;top:95.00px;font-family:'Liberation Sans', sans-serif;font-size:12px;font-weight:400;line-height:16px;color:#3b3a39;letter-spacing:0.240px;">Symbol</div>
<svg style="position:absolute;left:1076.6999999999998px;top:100.6px;" width="8" height="6" viewBox="0 0 8 6"><path d="M0.5 0.6L3.0 3.2L5.5 0.6" fill="none" stroke="#3b3a39" stroke-width="1.15"/></svg>
<div class="t" style="left:1035.87px;top:145.00px;font-family:'Liberation Sans', sans-serif;font-size:12px;font-weight:400;line-height:16px;color:#444;letter-spacing:-0.150px;transform:scaleX(0.9342);transform-origin:0 0;">Symbols</div>
<svg style="position:absolute;left:1155px;top:151px;" width="12" height="7" viewBox="0 0 12 7"><path d="M0.8 6.2L6 1L11.2 6.2" fill="none" stroke="#3b3a39" stroke-width="1.2"/></svg>
<svg style="position:absolute;left:1101px;top:43px;" width="14" height="14" viewBox="0 0 14 14"><g fill="none" stroke="#2b579a" stroke-width="1.1" stroke-linejoin="round"><path d="M1.6 5.2V11.9H10.2V8.6"/><path d="M3.8 9.4C4 6.6 6 4.8 8.6 4.6V2.2L12.6 5.6L8.6 9V6.8C6.6 6.8 5 7.6 3.8 9.4Z"/></g></svg>
<div style="position:absolute;left:0px;top:705px;width:1175px;height:23px;background:#f3f2f1;box-sizing:border-box;border-top:1px solid #c8c6c4;"></div>
<div class="t" style="left:9.06px;top:709.00px;font-family:'Liberation Sans', sans-serif;font-size:12px;font-weight:400;line-height:16px;color:#444444;letter-spacing:-0.150px;transform:scaleX(0.9436);transform-origin:0 0;">Page 1 of 1</div>
<div class="t" style="left:85.00px;top:709.00px;font-family:'Liberation Sans', sans-serif;font-size:12px;font-weight:400;line-height:16px;color:#444444;letter-spacing:-0.257px;">28 words</div>
<div class="t" style="left:204.00px;top:709.00px;font-family:'Liberation Sans', sans-serif;font-size:12px;font-weight:400;line-height:16px;color:#444444;letter-spacing:-0.208px;">Accessibility: Good to go</div>
<div class="t" style="left:821.36px;top:709.00px;font-family:'Liberation Sans', sans-serif;font-size:12px;font-weight:400;line-height:16px;color:#444444;letter-spacing:-0.150px;transform:scaleX(0.9375);transform-origin:0 0;">Focus</div>
<div class="t" style="left:1128.09px;top:709.00px;font-family:'Liberation Sans', sans-serif;font-size:12px;font-weight:400;line-height:16px;color:#444444;letter-spacing:-0.150px;transform:scaleX(0.9072);transform-origin:0 0;">100%</div>
<div style="position:absolute;left:904px;top:706px;width:39px;height:21px;background:#c8c8c8;"></div>
<svg style="position:absolute;left:151px;top:710.3px;" width="15" height="13" viewBox="0 0 15 13"><g fill="none" stroke="#444444" stroke-width="1.15" stroke-linejoin="miter"><path d="M5.6 11H0.6V0.6H13V3.4"/><path d="M6.9 0.6V7.2"/><path d="M12.4 4.4L13.9 5.9L8 11.6L5.6 12.4L6.4 10.1Z" stroke-linejoin="round"/></g></svg>
<svg style="position:absolute;left:185px;top:708px;" width="17" height="16" viewBox="0 0 17 16"><g fill="none" stroke="#444444" stroke-width="1" stroke-linecap="round" stroke-linejoin="round"><circle cx="7" cy="3.2" r="1.9"/><path d="M5 4.6C4 3.5 2.4 3.4 1.5 4.2C0.9 5.1 1.3 6.3 2.6 6.3L4.8 6.2L4.6 9.4L3.3 13.2C3.1 14.4 4 14.8 4.8 14.3"/><path d="M9 4.6C10 3.5 11.6 3.4 12.5 4.2C13.1 5.1 12.7 6.3 11.4 6.3L9.4 6.2V9.2"/><path d="M7.4 11.6L10.3 14.4L15.4 9.2"/></g></svg>
<svg style="position:absolute;left:803.5px;top:708.5px;" width="15" height="15" viewBox="0 0 15 15"><g fill="none" stroke="#444444" stroke-width="1.1"><path d="M0.6 3.6V0.6H3.6M11.4 0.6H14.4V3.6M14.4 11.4V14.4H11.4M3.6 14.4H0.6V11.4"/><path d="M4 3H8.6L11 5.4V12H4Z"/><path d="M8.4 3V5.6H11"/></g></svg>
<svg style="position:absolute;left:876px;top:709px;" width="14" height="13" viewBox="0 0 14 13"><g fill="none" stroke="#444444" stroke-width="1.1"><path d="M0.6 1H5.2C6 1 6.6 1.6 6.6 2.4V11.6H0.6ZM12.6 1H8C7.2 1 6.6 1.6 6.6 2.4V11.6H12.6Z"/><path d="M2.2 3.6H5M2.2 5.8H5M2.2 8H5M8.2 3.6H11M8.2 5.8H11M8.2 8H11" stroke-width="1"/></g></svg>
<svg style="position:absolute;left:916px;top:709px;" width="13" height="15" viewBox="0 0 13 15"><rect x="0.6" y="0.6" width="11" height="13" fill="#f3f2f1" stroke="#444444" stroke-width="1.1"/><path d="M2.6 3.5H9.6M2.6 5.5H9.6M2.6 7.5H9.6M2.6 9.5H9.6M2.6 11.5H9.6" stroke="#444444" stroke-width="1"/></svg>
<svg style="position:absolute;left:956px;top:709px;" width="15" height="15" viewBox="0 0 15 15"><path d="M6 13.4H0.6V0.6H11.4V5.6" fill="none" stroke="#444444" stroke-width="1.1"/><path d="M2.4 3.5H9.6M2.4 5.5H6.6M2.4 7.5H5.4M2.4 9.5H5" stroke="#444444" stroke-width="1"/><circle cx="10" cy="10.4" r="4" fill="#f3f2f1" stroke="#444444" stroke-width="1.1"/><ellipse cx="10" cy="10.4" rx="1.7" ry="4" fill="none" stroke="#444444" stroke-width="0.9"/><path d="M6 10.4H14" stroke="#444444" stroke-width="0.9"/></svg>
<div style="position:absolute;left:989px;top:716px;width:8px;height:1px;background:#444444;"></div>
<div style="position:absolute;left:1002px;top:716px;width:100px;height:1px;background:#8a8886;"></div>
<div style="position:absolute;left:1050.5px;top:710.5px;width:4.5px;height:12px;background:#666;"></div>
<div style="position:absolute;left:1107px;top:716px;width:8px;height:1px;background:#444444;"></div>
<div style="position:absolute;left:1110.5px;top:712.5px;width:1px;height:8px;background:#444444;"></div>
<div style="position:absolute;left:63px;top:141px;width:199px;height:339px;background:#ffffff;box-sizing:border-box;border:1px solid #c6c6c6;box-shadow:0 1px 6px rgba(0,0,0,0.32);"></div>
<div class="t" style="left:79.80px;top:148.60px;font-family:'Liberation Sans', sans-serif;font-size:12px;font-weight:700;line-height:16px;color:#262626;letter-spacing:-0.075px;">8x6 Table</div>
<svg style="position:absolute;left:63px;top:173px;" width="199" height="152" viewBox="0 0 199 152"><rect x="5.5" y="0.5" width="17" height="17" fill="#fff" stroke="#f04e0b" stroke-width="1"/><rect x="6.5" y="1.5" width="15" height="15" fill="none" stroke="#ffe8a6" stroke-width="1"/><rect x="24.5" y="0.5" width="17" height="17" fill="#fff" stroke="#f04e0b" stroke-width="1"/><rect x="25.5" y="1.5" width="15" height="15" fill="none" stroke="#ffe8a6" stroke-width="1"/><rect x="43.5" y="0.5" width="17" height="17" fill="#fff" stroke="#f04e0b" stroke-width="1"/><rect x="44.5" y="1.5" width="15" height="15" fill="none" stroke="#ffe8a6" stroke-width="1"/><rect x="62.5" y="0.5" width="17" height="17" fill="#fff" stroke="#f04e0b" stroke-width="1"/><rect x="63.5" y="1.5" width="15" height="15" fill="none" stroke="#ffe8a6" stroke-width="1"/><rect x="81.5" y="0.5" width="17" height="17" fill="#fff" stroke="#f04e0b" stroke-width="1"/><rect x="82.5" y="1.5" width="15" height="15" fill="none" stroke="#ffe8a6" stroke-width="1"/><rect x="100.5" y="0.5" width="17" height="17" fill="#fff" stroke="#f04e0b" stroke-width="1"/><rect x="101.5" y="1.5" width="15" height="15" fill="none" stroke="#ffe8a6" stroke-width="1"/><rect x="119.5" y="0.5" width="17" height="17" fill="#fff" stroke="#f04e0b" stroke-width="1"/><rect x="120.5" y="1.5" width="15" height="15" fill="none" stroke="#ffe8a6" stroke-width="1"/><rect x="138.5" y="0.5" width="17" height="17" fill="#fff" stroke="#f04e0b" stroke-width="1"/><rect x="139.5" y="1.5" width="15" height="15" fill="none" stroke="#ffe8a6" stroke-width="1"/><rect x="158.5" y="1.5" width="15" height="15" fill="#fff" stroke="#606060" stroke-width="1"/><rect x="177.5" y="1.5" width="15" height="15" fill="#fff" stroke="#606060" stroke-width="1"/><rect x="5.5" y="19.5" width="17" height="17" fill="#fff" stroke="#f04e0b" stroke-width="1"/><rect x="6.5" y="20.5" width="15" height="15" fill="none" stroke="#ffe8a6" stroke-width="1"/><rect x="24.5" y="19.5" width="17" height="17" fill="#fff" stroke="#f04e0b" stroke-width="1"/><rect x="25.5" y="20.5" width="15" height="15" fill="none" stroke="#ffe8a6" stroke-width="1"/><rect x="43.5" y="19.5" width="17" height="17" fill="#fff" stroke="#f04e0b" stroke-width="1"/><rect x="44.5" y="20.5" width="15" height="15" fill="none" stroke="#ffe8a6" stroke-width="1"/><rect x="62.5" y="19.5" width="17" height="17" fill="#fff" stroke="#f04e0b" stroke-width="1"/><rect x="63.5" y="20.5" width="15" height="15" fill="none" stroke="#ffe8a6" stroke-width="1"/><rect x="81.5" y="19.5" width="17" height="17" fill="#fff" stroke="#f04e0b" stroke-width="1"/><rect x="82.5" y="20.5" width="15" height="15" fill="none" stroke="#ffe8a6" stroke-width="1"/><rect x="100.5" y="19.5" width="17" height="17" fill="#fff" stroke="#f04e0b" stroke-width="1"/><rect x="101.5" y="20.5" width="15" height="15" fill="none" stroke="#ffe8a6" stroke-width="1"/><rect x="119.5" y="19.5" width="17" height="17" fill="#fff" stroke="#f04e0b" stroke-width="1"/><rect x="120.5" y="20.5" width="15" height="15" fill="none" stroke="#ffe8a6" stroke-width="1"/><rect x="138.5" y="19.5" width="17" height="17" fill="#fff" stroke="#f04e0b" stroke-width="1"/><rect x="139.5" y="20.5" width="15" height="15" fill="none" stroke="#ffe8a6" stroke-width="1"/><rect x="158.5" y="20.5" width="15" height="15" fill="#fff" stroke="#606060" stroke-width="1"/><rect x="177.5" y="20.5" width="15" height="15" fill="#fff" stroke="#606060" stroke-width="1"/><rect x="5.5" y="38.5" width="17" height="17" fill="#fff" stroke="#f04e0b" stroke-width="1"/><rect x="6.5" y="39.5" width="15" height="15" fill="none" stroke="#ffe8a6" stroke-width="1"/><rect x="24.5" y="38.5" width="17" height="17" fill="#fff" stroke="#f04e0b" stroke-width="1"/><rect x="25.5" y="39.5" width="15" height="15" fill="none" stroke="#ffe8a6" stroke-width="1"/><rect x="43.5" y="38.5" width="17" height="17" fill="#fff" stroke="#f04e0b" stroke-width="1"/><rect x="44.5" y="39.5" width="15" height="15" fill="none" stroke="#ffe8a6" stroke-width="1"/><rect x="62.5" y="38.5" width="17" height="17" fill="#fff" stroke="#f04e0b" stroke-width="1"/><rect x="63.5" y="39.5" width="15" height="15" fill="none" stroke="#ffe8a6" stroke-width="1"/><rect x="81.5" y="38.5" width="17" height="17" fill="#fff" stroke="#f04e0b" stroke-width="1"/><rect x="82.5" y="39.5" width="15" height="15" fill="none" stroke="#ffe8a6" stroke-width="1"/><rect x="100.5" y="38.5" width="17" height="17" fill="#fff" stroke="#f04e0b" stroke-width="1"/><rect x="101.5" y="39.5" width="15" height="15" fill="none" stroke="#ffe8a6" stroke-width="1"/><rect x="119.5" y="38.5" width="17" height="17" fill="#fff" stroke="#f04e0b" stroke-width="1"/><rect x="120.5" y="39.5" width="15" height="15" fill="none" stroke="#ffe8a6" stroke-width="1"/><rect x="138.5" y="38.5" width="17" height="17" fill="#fff" stroke="#f04e0b" stroke-width="1"/><rect x="139.5" y="39.5" width="15" height="15" fill="none" stroke="#ffe8a6" stroke-width="1"/><rect x="158.5" y="39.5" width="15" height="15" fill="#fff" stroke="#606060" stroke-width="1"/><rect x="177.5" y="39.5" width="15" height="15" fill="#fff" stroke="#606060" stroke-width="1"/><rect x="5.5" y="57.5" width="17" height="17" fill="#fff" stroke="#f04e0b" stroke-width="1"/><rect x="6.5" y="58.5" width="15" height="15" fill="none" stroke="#ffe8a6" stroke-width="1"/><rect x="24.5" y="57.5" width="17" height="17" fill="#fff" stroke="#f04e0b" stroke-width="1"/><rect x="25.5" y="58.5" width="15" height="15" fill="none" stroke="#ffe8a6" stroke-width="1"/><rect x="43.5" y="57.5" width="17" height="17" fill="#fff" stroke="#f04e0b" stroke-width="1"/><rect x="44.5" y="58.5" width="15" height="15" fill="none" stroke="#ffe8a6" stroke-width="1"/><rect x="62.5" y="57.5" width="17" height="17" fill="#fff" stroke="#f04e0b" stroke-width="1"/><rect x="63.5" y="58.5" width="15" height="15" fill="none" stroke="#ffe8a6" stroke-width="1"/><rect x="81.5" y="57.5" width="17" height="17" fill="#fff" stroke="#f04e0b" stroke-width="1"/><rect x="82.5" y="58.5" width="15" height="15" fill="none" stroke="#ffe8a6" stroke-width="1"/><rect x="100.5" y="57.5" width="17" height="17" fill="#fff" stroke="#f04e0b" stroke-width="1"/><rect x="101.5" y="58.5" width="15" height="15" fill="none" stroke="#ffe8a6" stroke-width="1"/><rect x="119.5" y="57.5" width="17" height="17" fill="#fff" stroke="#f04e0b" stroke-width="1"/><rect x="120.5" y="58.5" width="15" height="15" fill="none" stroke="#ffe8a6" stroke-width="1"/><rect x="138.5" y="57.5" width="17" height="17" fill="#fff" stroke="#f04e0b" stroke-width="1"/><rect x="139.5" y="58.5" width="15" height="15" fill="none" stroke="#ffe8a6" stroke-width="1"/><rect x="158.5" y="58.5" width="15" height="15" fill="#fff" stroke="#606060" stroke-width="1"/><rect x="177.5" y="58.5" width="15" height="15" fill="#fff" stroke="#606060" stroke-width="1"/><rect x="5.5" y="76.5" width="17" height="17" fill="#fff" stroke="#f04e0b" stroke-width="1"/><rect x="6.5" y="77.5" width="15" height="15" fill="none" stroke="#ffe8a6" stroke-width="1"/><rect x="24.5" y="76.5" width="17" height="17" fill="#fff" stroke="#f04e0b" stroke-width="1"/><rect x="25.5" y="77.5" width="15" height="15" fill="none" stroke="#ffe8a6" stroke-width="1"/><rect x="43.5" y="76.5" width="17" height="17" fill="#fff" stroke="#f04e0b" stroke-width="1"/><rect x="44.5" y="77.5" width="15" height="15" fill="none" stroke="#ffe8a6" stroke-width="1"/><rect x="62.5" y="76.5" width="17" height="17" fill="#fff" stroke="#f04e0b" stroke-width="1"/><rect x="63.5" y="77.5" width="15" height="15" fill="none" stroke="#ffe8a6" stroke-width="1"/><rect x="81.5" y="76.5" width="17" height="17" fill="#fff" stroke="#f04e0b" stroke-width="1"/><rect x="82.5" y="77.5" width="15" height="15" fill="none" stroke="#ffe8a6" stroke-width="1"/><rect x="100.5" y="76.5" width="17" height="17" fill="#fff" stroke="#f04e0b" stroke-width="1"/><rect x="101.5" y="77.5" width="15" height="15" fill="none" stroke="#ffe8a6" stroke-width="1"/><rect x="119.5" y="76.5" width="17" height="17" fill="#fff" stroke="#f04e0b" stroke-width="1"/><rect x="120.5" y="77.5" width="15" height="15" fill="none" stroke="#ffe8a6" stroke-width="1"/><rect x="138.5" y="76.5" width="17" height="17" fill="#fff" stroke="#f04e0b" stroke-width="1"/><rect x="139.5" y="77.5" width="15" height="15" fill="none" stroke="#ffe8a6" stroke-width="1"/><rect x="158.5" y="77.5" width="15" height="15" fill="#fff" stroke="#606060" stroke-width="1"/><rect x="177.5" y="77.5" width="15" height="15" fill="#fff" stroke="#606060" stroke-width="1"/><rect x="5.5" y="95.5" width="17" height="17" fill="#fff" stroke="#f04e0b" stroke-width="1"/><rect x="6.5" y="96.5" width="15" height="15" fill="none" stroke="#ffe8a6" stroke-width="1"/><rect x="24.5" y="95.5" width="17" height="17" fill="#fff" stroke="#f04e0b" stroke-width="1"/><rect x="25.5" y="96.5" width="15" height="15" fill="none" stroke="#ffe8a6" stroke-width="1"/><rect x="43.5" y="95.5" width="17" height="17" fill="#fff" stroke="#f04e0b" stroke-width="1"/><rect x="44.5" y="96.5" width="15" height="15" fill="none" stroke="#ffe8a6" stroke-width="1"/><rect x="62.5" y="95.5" width="17" height="17" fill="#fff" stroke="#f04e0b" stroke-width="1"/><rect x="63.5" y="96.5" width="15" height="15" fill="none" stroke="#ffe8a6" stroke-width="1"/><rect x="81.5" y="95.5" width="17" height="17" fill="#fff" stroke="#f04e0b" stroke-width="1"/><rect x="82.5" y="96.5" width="15" height="15" fill="none" stroke="#ffe8a6" stroke-width="1"/><rect x="100.5" y="95.5" width="17" height="17" fill="#fff" stroke="#f04e0b" stroke-width="1"/><rect x="101.5" y="96.5" width="15" height="15" fill="none" stroke="#ffe8a6" stroke-width="1"/><rect x="119.5" y="95.5" width="17" height="17" fill="#fff" stroke="#f04e0b" stroke-width="1"/><rect x="120.5" y="96.5" width="15" height="15" fill="none" stroke="#ffe8a6" stroke-width="1"/><rect x="138.5" y="95.5" width="17" height="17" fill="#fff" stroke="#f04e0b" stroke-width="1"/><rect x="139.5" y="96.5" width="15" height="15" fill="none" stroke="#ffe8a6" stroke-width="1"/><rect x="158.5" y="96.5" width="15" height="15" fill="#fff" stroke="#606060" stroke-width="1"/><rect x="177.5" y="96.5" width="15" height="15" fill="#fff" stroke="#606060" stroke-width="1"/><rect x="6.5" y="115.5" width="15" height="15" fill="#fff" stroke="#606060" stroke-width="1"/><rect x="25.5" y="115.5" width="15" height="15" fill="#fff" stroke="#606060" stroke-width="1"/><rect x="44.5" y="115.5" width="15" height="15" fill="#fff" stroke="#606060" stroke-width="1"/><rect x="63.5" y="115.5" width="15" height="15" fill="#fff" stroke="#606060" stroke-width="1"/><rect x="82.5" y="115.5" width="15" height="15" fill="#fff" stroke="#606060" stroke-width="1"/><rect x="101.5" y="115.5" width="15" height="15" fill="#fff" stroke="#606060" stroke-width="1"/><rect x="120.5" y="115.5" width="15" height="15" fill="#fff" stroke="#606060" stroke-width="1"/><rect x="139.5" y="115.5" width="15" height="15" fill="#fff" stroke="#606060" stroke-width="1"/><rect x="158.5" y="115.5" width="15" height="15" fill="#fff" stroke="#606060" stroke-width="1"/><rect x="177.5" y="115.5" width="15" height="15" fill="#fff" stroke="#606060" stroke-width="1"/><rect x="6.5" y="134.5" width="15" height="15" fill="#fff" stroke="#606060" stroke-width="1"/><rect x="25.5" y="134.5" width="15" height="15" fill="#fff" stroke="#606060" stroke-width="1"/><rect x="44.5" y="134.5" width="15" height="15" fill="#fff" stroke="#606060" stroke-width="1"/><rect x="63.5" y="134.5" width="15" height="15" fill="#fff" stroke="#606060" stroke-width="1"/><rect x="82.5" y="134.5" width="15" height="15" fill="#fff" stroke="#606060" stroke-width="1"/><rect x="101.5" y="134.5" width="15" height="15" fill="#fff" stroke="#606060" stroke-width="1"/><rect x="120.5" y="134.5" width="15" height="15" fill="#fff" stroke="#606060" stroke-width="1"/><rect x="139.5" y="134.5" width="15" height="15" fill="#fff" stroke="#606060" stroke-width="1"/><rect x="158.5" y="134.5" width="15" height="15" fill="#fff" stroke="#606060" stroke-width="1"/><rect x="177.5" y="134.5" width="15" height="15" fill="#fff" stroke="#606060" stroke-width="1"/></svg>
<div style="position:absolute;left:65px;top:336px;width:195px;height:1px;background:#e1dfdd;"></div>
<div class="t" style="left:102.80px;top:344.00px;font-family:'Liberation Sans', sans-serif;font-size:12px;font-weight:400;line-height:16px;color:#262626;letter-spacing:-0.214px;"><span style="text-decoration:underline;text-underline-offset:1.5px">I</span>nsert Table...</div>
<div class="t" style="left:102.80px;top:372.00px;font-family:'Liberation Sans', sans-serif;font-size:12px;font-weight:400;line-height:16px;color:#262626;letter-spacing:-0.289px;"><span style="text-decoration:underline;text-underline-offset:1.5px">D</span>raw Table</div>
<div class="t" style="left:101.80px;top:400.00px;font-family:'Liberation Sans', sans-serif;font-size:12px;font-weight:400;line-height:16px;color:#a6a6a6;letter-spacing:0.017px;">Con<span style="text-decoration:underline;text-underline-offset:1.5px">v</span>ert Text to Table...</div>
<div class="t" style="left:101.95px;top:428.00px;font-family:'Liberation Sans', sans-serif;font-size:12px;font-weight:400;line-height:16px;color:#262626;letter-spacing:-0.150px;transform:scaleX(0.9518);transform-origin:0 0;">E<span style="text-decoration:underline;text-underline-offset:1.5px">x</span>cel Spreadsheet</div>
<div class="t" style="left:101.90px;top:456.00px;font-family:'Liberation Sans', sans-serif;font-size:12px;font-weight:400;line-height:16px;color:#262626;letter-spacing:-0.082px;">Quick <span style="text-decoration:underline;text-underline-offset:1.5px">T</span>ables</div>
<svg style="position:absolute;left:77px;top:343px;" width="16" height="16" viewBox="0 0 16 16"><rect x="0.6" y="0.6" width="14.8" height="14.8" fill="#fafafa" stroke="#3b3a39" stroke-width="1.1"/><rect x="1.2" y="1.2" width="13.6" height="2" fill="#c8c6c4"/><path d="M0.6 3.6H15.4" stroke="#3b3a39" stroke-width="1"/><path d="M5.5 3.6V15.4M10.5 3.6V15.4M0.6 7.5H15.4M0.6 11.5H15.4" stroke="#605e5c" stroke-width="1"/></svg>
<svg style="position:absolute;left:77px;top:370px;" width="17" height="16" viewBox="0 0 17 16"><path d="M9 0.6H0.6V15.4H15.4V7" fill="none" stroke="#3b3a39" stroke-width="1.1"/><path d="M5.5 0.6V5M5.5 8V15.4M10.5 11V15.4M0.6 5.5H4M0.6 10.5H3M8 10.5H9.6M12 10.5H15.4" stroke="#605e5c" stroke-width="1" stroke-dasharray="2 1.4"/><path d="M13.4 0.8L15.4 2.8L8.6 9.6L6 10.4L6.8 7.8Z" fill="#83beec" stroke="#1e74c4" stroke-width="1"/></svg>
<svg style="position:absolute;left:77px;top:400px;" width="16" height="16" viewBox="0 0 16 16"><path d="M1 0.8H7M1 3.2H7M2.4 5.6H7" stroke="#b5b3b1" stroke-width="1"/><path d="M6.6 7.6H4.2A2.6 2.6 0 0 0 4.2 12.8H6.4M4.6 10.8L6.6 12.8L4.6 14.8" fill="none" stroke="#b5b3b1" stroke-width="1"/><rect x="10.6" y="0.6" width="4.8" height="13.8" fill="none" stroke="#b5b3b1" stroke-width="1.1"/><path d="M10.6 7.5H15.4M12.4 4H13.6M12.4 11H13.6" stroke="#b5b3b1" stroke-width="1"/></svg>
<svg style="position:absolute;left:77px;top:427px;" width="17" height="17" viewBox="0 0 17 17"><path d="M6 15.4H0.6V0.6H15.4V6" fill="none" stroke="#3b3a39" stroke-width="1.1"/><rect x="1.2" y="1.2" width="13.6" height="2" fill="#c8c6c4"/><path d="M0.6 3.6H15.4M5.5 3.6V15.4M0.6 7.5H6M0.6 11.5H6M10.5 3.6V6" stroke="#3b3a39" stroke-width="1"/><rect x="6.4" y="6.4" width="9.6" height="9.6" fill="#107c41"/><path d="M9 8.8L13.4 13.8M13.4 8.8L9 13.8" stroke="#fff" stroke-width="1.5"/></svg>
<svg style="position:absolute;left:77px;top:455px;" width="16" height="16" viewBox="0 0 16 16"><rect x="0.6" y="0.6" width="14.8" height="14.8" fill="#fafafa" stroke="#3b3a39" stroke-width="1.1"/><rect x="1.2" y="1.2" width="13.6" height="2" fill="#c8c6c4"/><path d="M0.6 3.6H15.4" stroke="#3b3a39" stroke-width="1"/><path d="M5.5 3.6V15.4M10.5 3.6V15.4M0.6 7.5H15.4M0.6 11.5H15.4" stroke="#605e5c" stroke-width="1"/></svg>
<svg style="position:absolute;left:246px;top:458px;" width="8" height="10" viewBox="0 0 8 10"><path d="M1 0.8L6.2 4.8L1 8.8" fill="none" stroke="#3b3a39" stroke-width="1.2"/></svg>
<svg style="position:absolute;left:0px;top:0px;pointer-events:none;" width="1175" height="728" viewBox="0 0 1175 728"><path d="M226 236.0L557.4 234.0V237.0L226 239.2Z" fill="#000"/><path d="M210 237.6L228.4 231.6L223.6 237.7L228.2 243.8Z" fill="#000"/></svg>
<svg style="position:absolute;left:0px;top:0px;pointer-events:none;" width="1175" height="728" viewBox="0 0 1175 728"><path d="M654.0 548H656.7V602.4H654.0Z" fill="#000"/><path d="M655.3 534L661.8 551.4L655.3 548.2L649 551.4Z" fill="#000"/></svg>
<svg style="position:absolute;left:211px;top:282px;" width="13" height="20" viewBox="0 0 13 20"><path d="M0.5 0.5V16.5L4.3 12.9L6.9 18.9L9.3 17.9L6.7 12.1H11.7Z" fill="#fff" stroke="#000" stroke-width="1" stroke-linejoin="miter"/></svg>
<div style="position:absolute;left:0px;top:0px;width:1px;height:728px;background:#2b579a;"></div>
<div style="position:absolute;left:1174px;top:0px;width:1px;height:728px;background:#2b579a;"></div>
<div style="position:absolute;left:0px;top:727px;width:1175px;height:1px;background:#2b579a;"></div>
</div></body></html>
